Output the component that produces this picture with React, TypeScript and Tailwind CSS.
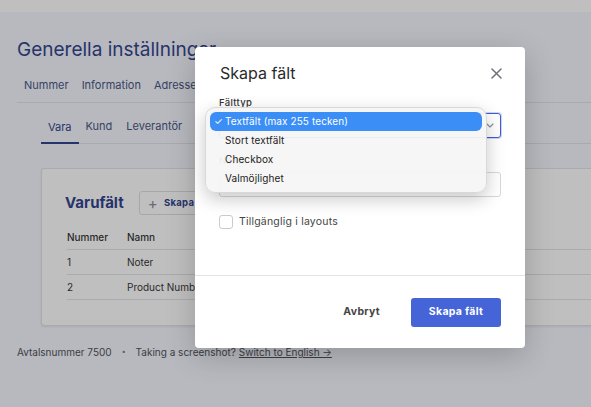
import React from "react";

const font = { fontFamily: "Inter, 'Noto Sans', 'Liberation Sans', sans-serif" };

function Tabs() {
  return (
    <div className="flex items-center gap-[13px] border-b border-[#e0e3ea] pb-[9px] pl-[7px] pt-[15px] text-[11px] leading-[16px] text-[#4c5886]">
      <span>Nummer</span>
      <span>Information</span>
      <span>Adresser</span>
      <span>Betalning</span>
      <span>Moms</span>
    </div>
  );
}

function SubTabs() {
  return (
    <div className="ml-[24px] flex items-end border-b border-[#e0e3ea] text-[11px] leading-[16px] text-[#4c5886]">
      <span className="-mb-px border-b-2 border-[#34468f] px-[7px] pb-[7px] pt-[15px] text-[#34468f]">Vara</span>
      <span className="px-[7px] pb-[9px] pt-[15px]">Kund</span>
      <span className="px-[7px] pb-[9px] pt-[15px]">Leverantör</span>
      <span className="px-[7px] pb-[9px] pt-[15px]">Order</span>
    </div>
  );
}

function FieldCard() {
  const rows = [
    ["1", "Noter", "Textfält (max 255 tecken)"],
    ["2", "Product Number", "Textfält (max 255 tecken)"],
  ];
  return (
    <div className="ml-[24px] mt-[24px] rounded-l-[3px] border border-r-0 border-[#e3e5ea] bg-white pb-[25px] pl-[23px] pt-[22px] shadow-[0_1px_2px_rgba(0,0,0,0.08)]">
      <div className="flex items-center gap-[15px]">
        <h2 className="text-[15px] font-bold leading-[24px] text-[#34468f]">Varufält</h2>
        <button className="flex h-[24px] items-center gap-[6px] rounded-[3px] border border-[#dcdfe6] px-[8px] text-[9.5px] font-bold tracking-[0.3px] text-[#34468f]">
          <span className="text-[15px] font-normal leading-none text-[#8a8f9c]">+</span>
          Skapa fält
        </button>
      </div>
      <div className="ml-[2px] mt-[15px] w-[600px] text-[10px] text-[#383838]">
        <div className="flex border-b border-[#e3e5ea] pb-[4px] font-medium">
          <span className="w-[60px]">Nummer</span>
          <span className="w-[200px]">Namn</span>
          <span>Typ</span>
        </div>
        {rows.map((r) => (
          <div key={r[0]} className="flex border-b border-[#e3e5ea] py-[4px] leading-[16px]">
            <span className="w-[60px]">{r[0]}</span>
            <span className="w-[200px]">{r[1]}</span>
            <span>{r[2]}</span>
          </div>
        ))}
      </div>
    </div>
  );
}

function Chevron() {
  return (
    <svg width="8" height="5" viewBox="0 0 8 5" fill="none">
      <path d="M1 1l3 3 3-3" stroke="#8a8d94" strokeWidth="1.1" strokeLinecap="round" strokeLinejoin="round" />
    </svg>
  );
}

function TypeMenu() {
  const items = ["Textfält (max 255 tecken)", "Stort textfält", "Checkbox", "Valmöjlighet"];
  return (
    <div className="absolute left-[-14px] top-[-6px] z-10 w-[282px] rounded-[10px] border border-[#d9d9d9] bg-[#f6f6f6]/95 p-[4px] shadow-[0_6px_18px_rgba(0,0,0,0.22)]">
      {items.map((t, i) => (
        <div
          key={t}
          className={
            "flex h-[19px] items-center rounded-[6px] text-[10px] tracking-[0.1px] " +
            (i === 0 ? "bg-[#3a8ef6] text-white" : "text-[#222]")
          }
        >
          <span className="w-[15px] pl-[4px] text-[10px]">{i === 0 ? "✓" : ""}</span>
          <span>{t}</span>
        </div>
      ))}
    </div>
  );
}

function Modal() {
  return (
    <div className="absolute left-[195px] top-[47px] z-20 flex h-[301px] w-[330px] flex-col rounded-[4px] bg-white shadow-[0_8px_30px_rgba(0,0,0,0.2)]">
      <div className="flex items-center justify-between px-[25px] pt-[16px]">
        <h3 className="text-[16px] leading-[20px] text-[#2b2b2b]">Skapa fält</h3>
        <svg width="11" height="11" viewBox="0 0 11 11" className="mr-[-2px]">
          <path d="M1 1l9 9M10 1l-9 9" stroke="#6f7177" strokeWidth="1.5" strokeLinecap="round" />
        </svg>
      </div>
      <div className="flex-1 px-[24px] pt-[14px]">
        <label className="block text-[9.5px] font-medium leading-[12px] tracking-[0.3px] text-[#333]">Fälttyp</label>
        <div className="relative mt-[4px]">
          <div className="flex h-[25px] w-[282px] items-center justify-end rounded-[3px] border border-[#3f5cd9] pr-[6px] shadow-[0_0_0_1px_rgba(63,92,217,0.25)]">
            <Chevron />
          </div>
          <TypeMenu />
        </div>
        <label className="mt-[17px] block text-[9.5px] font-medium leading-[12px] tracking-[0.3px] text-[#333]">Namn</label>
        <div className="mt-[5px] h-[25px] w-[282px] rounded-[3px] border border-[#d5d8de]" />
        <div className="mt-[17px] flex items-center gap-[6px]">
          <span className="h-[14px] w-[14px] rounded-[3px] border border-[#c8cbd2] bg-white" />
          <span className="text-[10.5px] tracking-[0.2px] text-[#444]">Tillgänglig i layouts</span>
        </div>
      </div>
      <div className="flex h-[73px] items-center justify-end gap-[31px] border-t border-[#e4e4e4] px-[24px]">
        <span className="text-[10.5px] font-bold tracking-[0.3px] text-[#444]">Avbryt</span>
        <button className="h-[29px] w-[90px] rounded-[3px] bg-[#4464d8] text-[10.5px] font-bold tracking-[0.3px] text-white">
          Skapa fält
        </button>
      </div>
    </div>
  );
}

export default function App() {
  return (
    <div className="relative h-[407px] w-[591px] overflow-hidden bg-[#f4f7fe]" style={font}>
      <div className="h-[12px] bg-white" />
      <div className="pl-[17px]">
        <h1 className="pt-[26px] text-[19px] leading-[24px] text-[#34468f]">Generella inställningar</h1>
        <Tabs />
        <SubTabs />
        <FieldCard />
        <div className="mt-[19px] flex items-center text-[10px] text-[#50535b]">
          <span>Avtalsnummer 7500</span>
          <span className="mx-[10px] text-[7px] text-[#7a7d84]">•</span>
          <span>Taking a screenshot?</span>
          <span className="ml-[3px] underline">Switch to English →</span>
        </div>
      </div>
      <div className="absolute inset-0 z-10 bg-black/25" />
      <Modal />
    </div>
  );
}
